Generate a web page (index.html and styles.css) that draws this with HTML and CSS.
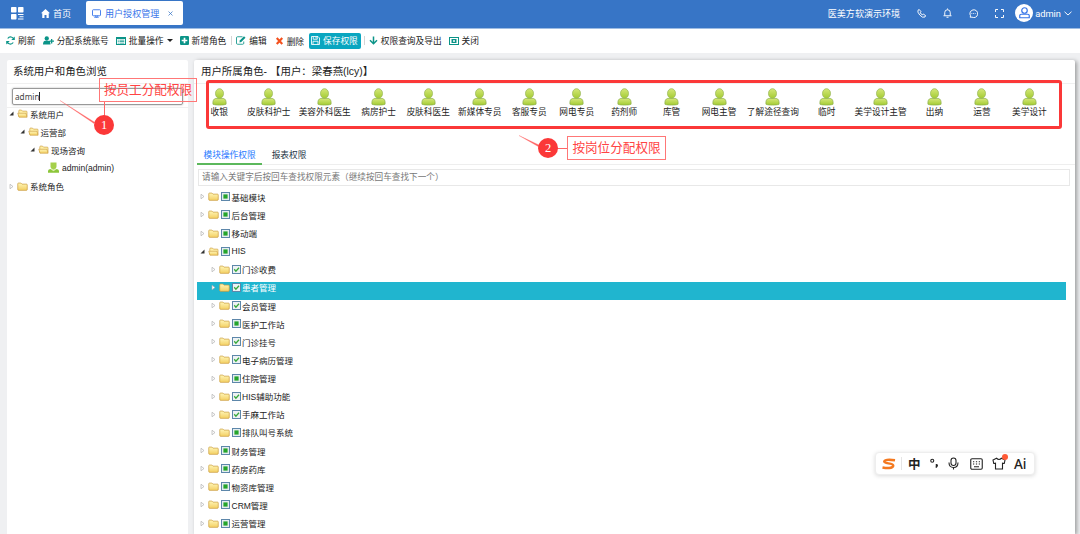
FILE: index.html
```html
<!DOCTYPE html>
<html lang="zh-CN">

<head>
  <meta charset="UTF-8" />
  <meta name="viewport" content="width=device-width, initial-scale=1.0" />
  <title>用户授权管理</title>
  <link rel="stylesheet" href="styles.css">
</head>

<body>
  <!-- 图标 -->
  <svg class="sprite" width="0" height="0">
    <defs>
      <linearGradient id="g-user" x1="0" y1="0" x2="0" y2="1">
        <stop offset="0" stop-color="#d5e878" />
        <stop offset="1" stop-color="#a3cb33" />
      </linearGradient>
      <linearGradient id="g-folder" x1="0" y1="0" x2="0" y2="1">
        <stop offset="0" stop-color="#fff6b8" />
        <stop offset="1" stop-color="#f3cf62" />
      </linearGradient>
    </defs>
    <symbol id="i-role" viewBox="0 0 16 19">
      <path d="M1 17.200c-.3-4 .7-5.700 3-6.200h8c2.300.5 3.300 2.200 3 6.200-2 1.200-12 1.200-14 0z" fill="url(#g-user)" stroke="#8eb04a" stroke-width=".8" />
      <ellipse cx="8" cy="5.800" rx="4.300" ry="5.200" fill="url(#g-user)" stroke="#9bb85c" stroke-width=".8" />
    </symbol>
    <symbol id="i-folder" viewBox="0 0 20 17">
      <path d="M1 14V3.500Q1 2 2.500 2h4.500l2 2h8.500Q19 4 19 5.500V14q0 1.800-1.800 1.800H2.800Q1 15.800 1 14z" fill="url(#g-folder)" stroke="#c99a3c" stroke-width="1.300" />
    </symbol>
    <symbol id="i-folder-open" viewBox="0 0 20 17">
      <path d="M3 14V3.500Q3 2 4.500 2H8l2 2h7q1.500 0 1.500 1.500V14z" fill="#fff0a8" stroke="#c99a3c" stroke-width="1.200" />
      <path d="M1 8h15.500l2.200 7.500H3.500z" fill="url(#g-folder)" stroke="#c99a3c" stroke-width="1.200" />
    </symbol>
    <symbol id="i-part" viewBox="0 0 18 18">
      <rect x="1" y="1" width="16" height="16" fill="#e4edf0" stroke="#5d87aa" stroke-width="2" />
      <rect x="4.800" y="4.800" width="8.400" height="8.400" fill="#25a52b" />
    </symbol>
    <symbol id="i-check" viewBox="0 0 18 18">
      <rect x="1" y="1" width="16" height="16" fill="#eef2f4" stroke="#5d87aa" stroke-width="2" />
      <path d="M4.500 8.500l3.300 4L14 5.500" fill="none" stroke="#36a83a" stroke-width="2.500" />
    </symbol>
    <symbol id="i-closed" viewBox="0 0 10 14">
      <path d="M2 2.500v9L8 7z" fill="#fff" stroke="#aaa" stroke-width="1.300" />
    </symbol>
    <symbol id="i-open" viewBox="0 0 10 10">
      <path d="M9 1v8H1z" fill="#333" />
    </symbol>
  </svg>

  <header class="header">
    <svg class="logo" viewBox="0 0 26 26" fill="#fff">
      <rect width="11" height="11" rx="1.500" /><rect y="14" width="11" height="11" rx="1.500" /><rect x="14" width="11" height="11" rx="1.500" />
      <path d="M14 14h11v2H14zM17 18.500h8v2h-8zM14 23h11v2H14z" />
    </svg>
    <a class="home">
      <svg width="9" height="9" viewBox="0 0 18 18" fill="#fff"><path d="M9 0L0 8.500h2.500V18H7v-6h4v6h4.500V8.500H18z" /></svg>
      首页
    </a>
    <div class="page-tab">
      <svg width="9" height="9" viewBox="0 0 18 18" fill="none" stroke="#3875ea" stroke-width="1.800"><rect x="1" y="1.500" width="16" height="12" rx="1.500" /><path d="M4.500 16.500h9M6 13.500l3 2.500 3-2.500" /></svg>
      <span>用户授权管理</span>
      <svg class="tab-close" width="5" height="5" viewBox="0 0 10 10" stroke="#3875c6" stroke-width="1.500"><path d="M1 1l8 8M9 1L1 9" /></svg>
    </div>
    <div class="header-right">
      <span class="env">医美方软演示环境</span>
      <svg width="9" height="9" viewBox="0 0 18 18"><path d="M2 2.500L4.500 1 8 5.500 6.500 7.500q1.500 3 4 4l2-1.300L17 13l-1 3q-5 2.500-10.500-4T2 2.500z" /></svg>
      <svg width="9" height="10" viewBox="0 0 18 20"><path d="M1 15.500h16M3.500 15V9q0-5.500 5.500-5.500T14.500 9v6M9 1v2M7 18.500h4" /></svg>
      <svg width="9" height="9" viewBox="0 0 18 18"><path d="M2.500 16.500l.5-3A7.800 7.800 0 1 1 6 16.300zM5 9h1.500M8.300 9h1.500M11.600 9h1.500" /></svg>
      <svg width="9" height="9" viewBox="0 0 18 18"><path d="M1 6V1h5M12 1h5v5M17 12v5h-5M6 17H1v-5" /></svg>
      <span class="avatar">
        <svg width="11" height="12" viewBox="0 0 22 24"><circle cx="11" cy="7" r="5.500" /><path d="M1.500 21.500V17q0-2.500 3-2.500h13q3 0 3 2.500v4.500z" /></svg>
      </span>
      <span class="name">admin</span>
      <svg class="arrow" width="8" height="5" viewBox="0 0 16 10"><path d="M1 1.500l7 6.500 7-6.500" /></svg>
    </div>
  </header>

  <div class="toolbar">
    <a class="tool"><svg width="9" height="9" viewBox="0 0 18 18"><path d="M16 7A7 7 0 0 0 3.500 5M2 11a7 7 0 0 0 12.500 2" fill="none" stroke="#0b9488" stroke-width="2.400" /><path d="M17.500 1v7h-7zM.5 17v-7h7z" /></svg>刷新</a>
    <a class="tool assign"><svg width="11" height="9" viewBox="0 0 22 18"><circle cx="7.500" cy="5" r="4.300" /><path d="M0 17q0-7 4.500-7.500h6q4.500.5 4.500 7.500zM16 6h2.600v3H22v2.600h-3.400V15H16v-3.400h-3V9h3z" /></svg>分配系统账号</a>
    <a class="tool batch"><svg width="10" height="8" viewBox="0 0 20 16"><path d="M0 0h20v16H0zM2 4v10h16V4z" fill-rule="evenodd" /><path d="M3.500 5.500h2v1.500h-2zM7 5.500h9.500v1.500H7zM3.500 8.500h2V10h-2zM7 8.500h9.500V10H7zM3.500 11.500h2V13h-2zM7 11.500h9.500V13H7z" /></svg>批量操作<i class="caret"></i></a>
    <a class="tool add"><svg width="9" height="9" viewBox="0 0 16 16"><path d="M2 0h12q2 0 2 2v12q0 2-2 2H2q-2 0-2-2V2q0-2 2-2zM6.500 3v3.500H3v3h3.500V13h3V9.500H13v-3H9.500V3z" fill-rule="evenodd" /></svg>新增角色</a>
    <i class="line"></i>
    <a class="tool edit"><svg width="10" height="9" viewBox="0 0 20 18"><path d="M13 1.500H3Q1 1.500 1 3.500v11q0 2 2 2h10.500q2 0 2-2V11" fill="none" stroke="#0b9488" stroke-width="1.700" /><path d="M7 13l.5-4L16 .5 19 3.500 10.500 12z" /></svg>编辑</a>
    <a class="tool del"><svg width="9" height="8" viewBox="0 0 16 16"><path d="M2.500 2l11 12M13.500 2l-11 12" stroke="#f4511e" stroke-width="4.200" /></svg>删除</a>
    <a class="tool save"><svg width="9" height="9" viewBox="0 0 18 18" fill="none" stroke="#fff" stroke-width="1.700"><path d="M1 1h13l3 3v13H1zM4.500 1v5.500h8V1M4 17v-6.500h10V17M10 2v3" /></svg>保存权限</a>
    <i class="line"></i>
    <a class="tool export"><svg width="9" height="9" viewBox="0 0 18 18"><path d="M9 1v14M2 8.500l7 7 7-7" fill="none" stroke="#0b9488" stroke-width="3" /></svg>权限查询及导出</a>
    <a class="tool close"><svg width="10" height="8" viewBox="0 0 20 16"><path d="M0 0h20v16H0zM2 2v12h16V2z" fill-rule="evenodd" /><path d="M5 4h10v8H5z" /><path d="M8 6l4 4M12 6l-4 4" stroke="#fff" stroke-width="1.500" /></svg>关闭</a>
  </div>

  <main class="main">
    <section class="panel side">
      <h2>系统用户和角色浏览</h2>
      <div class="search"><div class="search-input">admin<i class="cursor"></i></div></div>
      <ul class="tree">
        <li><svg class="arr"><use href="#i-open" /></svg><svg class="fd"><use href="#i-folder-open" /></svg>系统用户</li>
        <li class="lv2"><svg class="arr"><use href="#i-open" /></svg><svg class="fd"><use href="#i-folder-open" /></svg>运营部</li>
        <li class="lv3"><svg class="arr"><use href="#i-open" /></svg><svg class="fd"><use href="#i-folder-open" /></svg>现场咨询</li>
        <li class="lv4"><svg class="person" viewBox="0 0 22 22"><path d="M0 21.500V17q1-3 5-3h12q4 0 5 3v4.500z" fill="#8cc63a" /><path d="M5 1h12v9q-1 5-6 6-5-1-6-6z" fill="#a5d04a" /><path d="M5 14.500l6 4 6-4-2-1.500-4 2-4-2z" fill="#dcedb0" /></svg>admin(admin)</li>
        <li><svg class="arr shut"><use href="#i-closed" /></svg><svg class="fd"><use href="#i-folder" /></svg>系统角色</li>
      </ul>
    </section>

    <section class="panel content">
      <h2>用户所属角色- 【用户：梁春燕(lcy)】</h2>
      <div class="roles">
        <div class="role"><svg><use href="#i-role" /></svg>收银</div>
        <div class="role"><svg><use href="#i-role" /></svg>皮肤科护士</div>
        <div class="role"><svg><use href="#i-role" /></svg>美容外科医生</div>
        <div class="role"><svg><use href="#i-role" /></svg>病房护士</div>
        <div class="role"><svg><use href="#i-role" /></svg>皮肤科医生</div>
        <div class="role"><svg><use href="#i-role" /></svg>新媒体专员</div>
        <div class="role"><svg><use href="#i-role" /></svg>客服专员</div>
        <div class="role"><svg><use href="#i-role" /></svg>网电专员</div>
        <div class="role"><svg><use href="#i-role" /></svg>药剂师</div>
        <div class="role"><svg><use href="#i-role" /></svg>库管</div>
        <div class="role"><svg><use href="#i-role" /></svg>网电主管</div>
        <div class="role"><svg><use href="#i-role" /></svg>了解途径查询</div>
        <div class="role"><svg><use href="#i-role" /></svg>临时</div>
        <div class="role"><svg><use href="#i-role" /></svg>美学设计主管</div>
        <div class="role"><svg><use href="#i-role" /></svg>出纳</div>
        <div class="role"><svg><use href="#i-role" /></svg>运营</div>
        <div class="role"><svg><use href="#i-role" /></svg>美学设计</div>
      </div>
      <nav class="tabs">
        <a class="active">模块操作权限</a>
        <a>报表权限</a>
      </nav>
      <div class="filter">请输入关键字后按回车查找权限元素（继续按回车查找下一个）</div>
      <ul class="tree modules">
        <li><svg class="arr shut"><use href="#i-closed" /></svg><svg class="fd"><use href="#i-folder" /></svg><svg class="ck"><use href="#i-part" /></svg>基础模块</li>
        <li><svg class="arr shut"><use href="#i-closed" /></svg><svg class="fd"><use href="#i-folder" /></svg><svg class="ck"><use href="#i-part" /></svg>后台管理</li>
        <li><svg class="arr shut"><use href="#i-closed" /></svg><svg class="fd"><use href="#i-folder" /></svg><svg class="ck"><use href="#i-part" /></svg>移动端</li>
        <li><svg class="arr"><use href="#i-open" /></svg><svg class="fd"><use href="#i-folder-open" /></svg><svg class="ck"><use href="#i-part" /></svg>HIS</li>
        <li class="lv2"><svg class="arr shut"><use href="#i-closed" /></svg><svg class="fd"><use href="#i-folder" /></svg><svg class="ck"><use href="#i-check" /></svg>门诊收费</li>
        <li class="lv2 selected"><svg class="arr shut"><use href="#i-closed" /></svg><svg class="fd"><use href="#i-folder" /></svg><svg class="ck"><use href="#i-check" /></svg>患者管理</li>
        <li class="lv2"><svg class="arr shut"><use href="#i-closed" /></svg><svg class="fd"><use href="#i-folder" /></svg><svg class="ck"><use href="#i-check" /></svg>会员管理</li>
        <li class="lv2"><svg class="arr shut"><use href="#i-closed" /></svg><svg class="fd"><use href="#i-folder" /></svg><svg class="ck"><use href="#i-part" /></svg>医护工作站</li>
        <li class="lv2"><svg class="arr shut"><use href="#i-closed" /></svg><svg class="fd"><use href="#i-folder" /></svg><svg class="ck"><use href="#i-check" /></svg>门诊挂号</li>
        <li class="lv2"><svg class="arr shut"><use href="#i-closed" /></svg><svg class="fd"><use href="#i-folder" /></svg><svg class="ck"><use href="#i-check" /></svg>电子病历管理</li>
        <li class="lv2"><svg class="arr shut"><use href="#i-closed" /></svg><svg class="fd"><use href="#i-folder" /></svg><svg class="ck"><use href="#i-part" /></svg>住院管理</li>
        <li class="lv2"><svg class="arr shut"><use href="#i-closed" /></svg><svg class="fd"><use href="#i-folder" /></svg><svg class="ck"><use href="#i-check" /></svg>HIS辅助功能</li>
        <li class="lv2"><svg class="arr shut"><use href="#i-closed" /></svg><svg class="fd"><use href="#i-folder" /></svg><svg class="ck"><use href="#i-check" /></svg>手麻工作站</li>
        <li class="lv2"><svg class="arr shut"><use href="#i-closed" /></svg><svg class="fd"><use href="#i-folder" /></svg><svg class="ck"><use href="#i-part" /></svg>排队叫号系统</li>
        <li><svg class="arr shut"><use href="#i-closed" /></svg><svg class="fd"><use href="#i-folder" /></svg><svg class="ck"><use href="#i-part" /></svg>财务管理</li>
        <li><svg class="arr shut"><use href="#i-closed" /></svg><svg class="fd"><use href="#i-folder" /></svg><svg class="ck"><use href="#i-part" /></svg>药房药库</li>
        <li><svg class="arr shut"><use href="#i-closed" /></svg><svg class="fd"><use href="#i-folder" /></svg><svg class="ck"><use href="#i-part" /></svg>物资库管理</li>
        <li><svg class="arr shut"><use href="#i-closed" /></svg><svg class="fd"><use href="#i-folder" /></svg><svg class="ck"><use href="#i-part" /></svg>CRM管理</li>
        <li><svg class="arr shut"><use href="#i-closed" /></svg><svg class="fd"><use href="#i-folder" /></svg><svg class="ck"><use href="#i-part" /></svg>运营管理</li>
      </ul>
    </section>
  </main>

  <!-- 操作说明标注 -->
  <div class="roles-frame"></div>
  <svg class="mark-lines" width="1080" height="534" fill="none" stroke="#f66" stroke-width="1">
    <path d="M104.500 102v16M568 148.500h-12" />
    <path d="M60 100.500L95 122.500l-1 1zM519 135.500l21 10-1 1.500z" fill="#f66" stroke-width=".3" />
  </svg>
  <div class="mark-text mark-staff">按员工分配权限</div>
  <div class="mark-num num-staff">1</div>
  <div class="mark-text mark-post">按岗位分配权限</div>
  <div class="mark-num num-post">2</div>

  <!-- 输入法工具条 -->
  <div class="ime">
    <svg width="14" height="12" viewBox="0 0 28 24" fill="none" stroke="#f47920" stroke-width="5"><path d="M26 4.500Q6 1.500 4.500 7C4 12 23 9.500 22.500 15.500 21.500 21.500 9 20.500 1 19" /></svg>
    <i class="ime-line"></i>
    <span class="ime-cn">中</span>
    <svg class="ime-dot" width="9" height="12" viewBox="0 0 18 24"><circle cx="4.500" cy="5.500" r="3" /><path d="M13 13.500a1.500 1.500 0 1 1 0 3zq2 3-1.500 5.500" stroke-width="3" /></svg>
    <svg class="ime-mic" width="11" height="13" viewBox="0 0 22 26"><rect x="6" y="2" width="10" height="15" rx="5" /><path d="M2 11q0 10 9 10t9-10M11 21v4" /></svg>
    <svg class="ime-key" width="13" height="12" viewBox="0 0 26 24"><rect x="1.500" y="1.500" width="23" height="21" rx="2.500" /><path d="M6 7.500h2.500M11.800 7.500h2.500M17.500 7.500H20M6 12h2.500M11.800 12h2.500M17.500 12H20M8 17.500h10" /></svg>
    <div class="ime-skin">
      <svg width="14" height="13" viewBox="0 0 28 26"><path d="M9 2.500L2 6l1.500 7 3.500-.5V24h14V12.500l3.500.5L26 6l-7-3.500q-5 5-10 0z" /></svg>
      <i></i>
    </div>
    <span class="ime-ai">Ai</span>
  </div>
</body>

</html>
```

FILE: styles.css
```css
* {
  box-sizing: border-box;
}

body {
  margin: 0;
  height: 534px;
  overflow: hidden;
  display: flex;
  flex-direction: column;
  font-family: "Liberation Sans", "Noto Sans CJK SC", sans-serif;
  font-size: 8.7px;
  color: #222;
  background: #eff0f2;
}

svg {
  flex: none;
}

.sprite {
  position: absolute;
}

/* 顶栏 */
.header {
  flex: none;
  display: flex;
  align-items: center;
  height: 29px;
  padding: 0 8px 2px 11px;
  background: #3775c6;
  border-bottom: 1px solid #9dbce3;
  color: #fff;
  font-size: 9.05px;
}

.logo {
  width: 13px;
  height: 13px;
  margin-right: 17px;
}

.home {
  display: flex;
  align-items: center;
  gap: 3px;
  width: 45px;
}

.page-tab {
  display: flex;
  align-items: center;
  width: 97px;
  height: 24px;
  padding-left: 6px;
  border-radius: 2px;
  background: #fff;
  color: #3875ea;
}

.page-tab span {
  margin: 0 9px 0 4px;
}

.header-right {
  display: flex;
  align-items: center;
  margin-left: auto;
}

.header-right svg {
  margin-right: 17px;
  fill: none;
  stroke: #fff;
  stroke-width: 1.9;
}

.env {
  margin-right: 17px;
}

.avatar {
  display: flex;
  align-items: center;
  justify-content: center;
  width: 18px;
  height: 18px;
  margin: 0 2px 0 -6px;
  border-radius: 50%;
  background: #fff;
}

.header-right .avatar svg {
  margin: 0;
  stroke: #3775e8;
  stroke-width: 2.400;
}

.name {
  font-family: Roboto, sans-serif;
  font-size: 9.3px;
  margin-right: 3px;
}

.header-right .arrow {
  margin: 0;
}

/* 工具栏 */
.toolbar {
  flex: none;
  display: flex;
  align-items: center;
  height: 24px;
  padding: 0 0 1px 6px;
  background: #fff;
}

.tool {
  display: flex;
  align-items: center;
  gap: 3px;
  white-space: nowrap;
  fill: #0b9488;
}

.assign {
  margin-left: 7.300px;
}

.batch {
  margin-left: 7px;
}

.caret {
  border: 3px solid transparent;
  border-top-color: #222;
  border-bottom: 0;
}

.add {
  margin-left: 7px;
}

.line {
  width: 1px;
  height: 9px;
  margin: 0 4px 0 5px;
  background: #d5d5d5;
}

.del {
  margin-left: 8px;
  padding-top: 1px;
}

.save {
  height: 16px;
  margin-left: 5px;
  padding: 0 3px 0 2px;
  border-radius: 2px;
  background: #0aa6c0;
  color: #fff;
}

.save + .line {
  margin: 0 4px 0 3px;
}

.close {
  margin-left: 7px;
}

/* 主体 */
.main {
  flex: 1;
  display: flex;
  gap: 6px;
  padding: 7px 5px 0 7px;
  min-height: 0;
}

.panel {
  background: #fff;
  border-radius: 2px 2px 0 0;
  overflow: hidden;
}

.side {
  width: 181px;
}

.content {
  flex: 1;
  box-shadow: 2px 1px 4px rgba(0, 0, 0, 0.35);
}

h2 {
  height: 24px;
  margin: 0;
  padding-left: 6px;
  border-bottom: 1px solid #f0f0f0;
  font-size: 10.45px;
  font-weight: normal;
  line-height: 23px;
}

.content h2 {
  padding-left: 7px;
}

.search {
  padding: 4px 5px 3px 5px;
  height: 24px;
  border-bottom: 1px solid #f0f0f0;
}

.search-input {
  display: flex;
  align-items: center;
  height: 17px;
  width: 171px;
  padding-left: 2px;
  border: 1px solid #999;
  border-radius: 2px;
  box-shadow: 0 0 2px #aaa;
  color: #444;
  font-family: "Noto Sans", sans-serif;
  font-size: 8.2px;
}

.cursor {
  width: 1px;
  height: 9px;
  background: #222;
}

/* 树 */
.tree {
  list-style: none;
  margin: 0;
  padding: 0;
  font-size: 8.5px;
}

.tree li {
  display: flex;
  align-items: center;
  height: 18.13px;
  padding: 0 0 7px 3px;
}

.side .tree li {
  padding: 0 0 7px 2px;
}

.side .tree .lv2 {
  padding-left: 12.5px;
}

.side .tree .lv3 {
  padding-left: 23px;
}

.side .tree .lv4 {
  padding-left: 41px;
}

.arr {
  width: 5px;
  height: 5px;
  margin-right: 3px;
}

.arr.shut {
  height: 7px;
}

.fd {
  width: 11px;
  height: 9px;
  margin-right: 2px;
}

.person {
  width: 11px;
  height: 11px;
  margin-right: 3px;
}

.ck {
  width: 9px;
  height: 9px;
  margin-right: 1.500px;
}

/* 角色 */
.roles {
  display: flex;
  height: 62px;
  padding: 4px 0 0 1.500px;
}

.role {
  display: flex;
  flex-direction: column;
  align-items: center;
  min-width: 47.450px;
  padding: 0 4.1px;
  line-height: 13px;
  white-space: nowrap;
}

.role svg {
  width: 15px;
  height: 18px;
}

.tabs {
  display: flex;
  margin-left: 3px;
  height: 19px;
  border-bottom: 1px solid #eee;
  line-height: 19px;
}

.tabs a {
  height: 19px;
  padding: 0 6.500px;
  color: #234;
}

.tabs .active {
  margin-right: 3px;
  color: #2878ff;
  border-bottom: 2px solid #5cb85c;
}

.filter {
  height: 17px;
  margin: 4px 5px 0 4px;
  padding-left: 3px;
  border: 1px solid #e8e8e8;
  line-height: 15px;
  font-size: 8.65px;
  color: #777;
}

.modules {
  padding: 5.300px 9px 0 3px;
}

.modules .lv2 {
  padding-left: 13.500px;
}

.modules .selected {
  background: #20b5cf;
  color: #fff;
}

/* 标注 */
.roles-frame {
  position: absolute;
  left: 206px;
  top: 80px;
  width: 856px;
  height: 49px;
  border: 3px solid #fb3838;
  border-radius: 3px;
}

.mark-lines {
  position: absolute;
  left: 0;
  top: 0;
}

.mark-text {
  position: absolute;
  width: 98px;
  height: 24px;
  border: 1px solid #f77;
  color: #f44;
  font-size: 12.6px;
  line-height: 22px;
  text-align: center;
  white-space: nowrap;
}

.mark-staff {
  left: 99px;
  top: 78px;
}

.mark-post {
  left: 567px;
  top: 136px;
  width: 99px;
}

.mark-num {
  position: absolute;
  width: 20px;
  height: 20px;
  border-radius: 50%;
  background: #fb3838;
  color: #fff;
  font: 12.500px/20px "Liberation Serif", serif;
  text-align: center;
}

.num-staff {
  left: 94px;
  top: 115px;
}

.num-post {
  left: 538px;
  top: 138px;
}

/* 输入法 */
.ime {
  position: absolute;
  left: 875px;
  top: 452px;
  display: flex;
  align-items: center;
  width: 160px;
  height: 23px;
  padding-left: 6px;
  border: 1px solid #eee;
  border-radius: 4px;
  background: #fff;
  box-shadow: 0 1px 4px rgba(0, 0, 0, 0.15);
}

.ime svg:not(:first-child),
.ime-skin svg {
  fill: none;
  stroke: #222;
  stroke-width: 2.2;
}

.ime-line {
  width: 1px;
  height: 13px;
  margin: 0 6px 0 5px;
  background: #e5e5e5;
}

.ime-cn {
  width: 13px;
  font-size: 12.500px;
  font-weight: bold;
}

.ime-dot {
  margin-left: 9px;
}

.ime-mic {
  margin-left: 9px;
}

.ime-key {
  margin-left: 11px;
}

.ime-skin {
  position: relative;
  display: flex;
  margin-left: 9px;
}

.ime .ime-skin svg {
  fill: none;
  stroke: #222;
  stroke-width: 2.2;
}

.ime-skin i {
  position: absolute;
  top: -3px;
  right: -2px;
  width: 6px;
  height: 6px;
  border-radius: 50%;
  background: #ff5a36;
}

.ime-ai {
  margin-left: 8px;
  font-family: "Noto Sans", sans-serif;
  font-size: 13.5px;
  font-weight: 500;
}
```
